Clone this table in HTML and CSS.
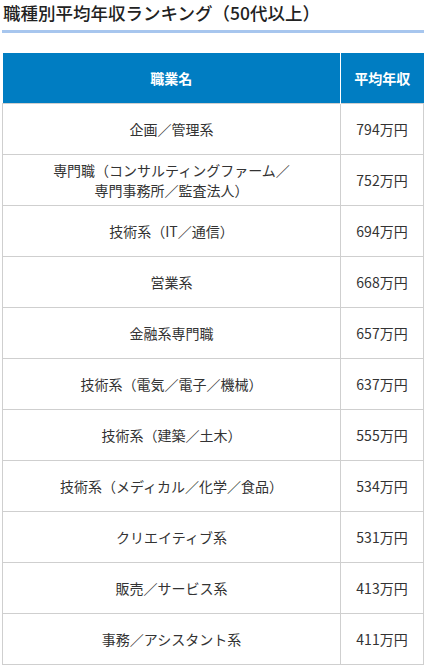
FILE: index.html
```html
<!DOCTYPE html>
<html lang="ja">
<head>
<meta charset="utf-8">
<link rel="stylesheet" href="styles.css">
</head>
<body>
<div class="page">
  <h2 class="title">職種別平均年収ランキング（50代以上）</h2>
  <table class="rank">
    <colgroup><col class="c-name"><col class="c-pay"></colgroup>
    <thead>
      <tr><th>職業名</th><th>平均年収</th></tr>
    </thead>
    <tbody>
      <tr><td>企画／管理系</td><td>794万円</td></tr>
      <tr><td>専門職（コンサルティングファーム／<br>専門事務所／監査法人）</td><td>752万円</td></tr>
      <tr><td>技術系（IT／通信）</td><td>694万円</td></tr>
      <tr><td>営業系</td><td>668万円</td></tr>
      <tr><td>金融系専門職</td><td>657万円</td></tr>
      <tr><td>技術系（電気／電子／機械）</td><td>637万円</td></tr>
      <tr><td>技術系（建築／土木）</td><td>555万円</td></tr>
      <tr><td>技術系（メディカル／化学／食品）</td><td>534万円</td></tr>
      <tr><td>クリエイティブ系</td><td>531万円</td></tr>
      <tr><td>販売／サービス系</td><td>413万円</td></tr>
      <tr><td>事務／アシスタント系</td><td>411万円</td></tr>
    </tbody>
  </table>
</div>
</body>
</html>
```
FILE: styles.css
```css
html, body {
  margin: 0;
  padding: 0;
  background: #fff;
}
body {
  font-family: "Noto Sans CJK JP", "Noto Sans", sans-serif;
  color: #333;
}
.page {
  padding: 0 3px 0 2px;
}
.title {
  margin: 0;
  font-size: 17.5px;
  font-weight: 500;
  line-height: 26px;
  padding: 0 0 4px 1px;
  border-bottom: 3px solid #a7c6ee;
  color: #222;
}
.rank {
  margin-top: 20px;
  width: 422px;
  border-collapse: collapse;
  table-layout: fixed;
  font-size: 14px;
  line-height: 20px;
}
.c-pay {
  width: 83px;
}
.rank th {
  background: #007dc2;
  color: #fff;
  font-weight: 700;
  height: 50px;
  padding: 0;
  border-left: 1px solid #fff;
  text-align: center;
  vertical-align: middle;
}
.rank th:first-child {
  border-left: 0;
}
.rank td {
  height: 50px;
  padding: 0 4px;
  border: 1px solid #cfcfcf;
  text-align: center;
  vertical-align: middle;
}
```
